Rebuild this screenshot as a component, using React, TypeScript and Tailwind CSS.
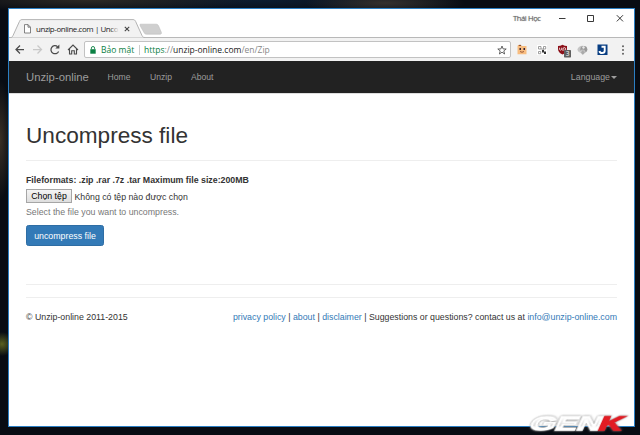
import React from "react";

const ui = "font-['Open_Sans','Noto_Sans',sans-serif]";

function Tab() {
  return (
    <div className="relative h-[29px] shrink-0">
      <svg className="absolute left-0 top-[10px]" width="170" height="19" viewBox="0 0 170 19">
        <path d="M0 18.5H1.5C3 18.5 3.4 17.8 4 16.6L10.4 2.6C11.1 1 11.6.6 13 .6H124C125.4 .6 126 1.2 126.7 2.6L133 16.6C133.7 18 134.3 18.5 136 18.5" fill="#f2f2f2" stroke="#b4b4b4" />
        <path d="M131.6 5.2H147C148.4 5.2 149 5.7 149.5 6.8L152.2 13C152.8 14.4 152.4 15.2 151 15.2H137.5C136.2 15.2 135.5 14.6 135 13.5L131.2 6.8C130.8 5.8 130.8 5.2 131.6 5.2Z" fill="#cfcfcf" stroke="#bdbdbd" strokeWidth=".6" />
      </svg>
      <div className={`relative flex items-center pl-[15px] pt-[13px] ${ui}`}>
        <svg width="7" height="10" viewBox="0 0 7 10" fill="#fff" stroke="#666" strokeWidth=".8">
          <path d="M.5 .6H4L6.5 3.2V9H.5ZM4 .6V3.2H6.5" />
        </svg>
        <div className="relative ml-[5px] h-[14px] w-[83px] whitespace-nowrap text-[7.9px] leading-[14px] tracking-[-0.39px] text-[#222]">
          unzip-online.com | Unco
          <div className="absolute right-0 top-0 h-full w-[9px] bg-linear-to-r from-transparent to-[#f2f2f2]" />
        </div>
        <svg className="ml-[5px]" width="6" height="6" viewBox="0 0 6 6" stroke="#444" strokeWidth="1.1">
          <path d="M.8 .8L5.2 5.2M5.2 .8L.8 5.2" />
        </svg>
      </div>
    </div>
  );
}

function TitleBar() {
  return (
    <div className="flex h-[29px] justify-between border-b border-[#b8b8b8] bg-white">
      <Tab />
      <div className="flex h-[17px] items-center">
        <span className={`w-[28px] whitespace-nowrap text-[7.6px] leading-[10px] tracking-[-0.4px] text-[#666] [text-shadow:0_0_1px_#999] ${ui}`}>Thái Học</span>
        <svg className="ml-[18px] mr-[9px]" width="66" height="10" viewBox="0 0 66 10" fill="none" stroke="#222" strokeWidth=".9">
          <path d="M0 5.5H6.5M28.5 2.5H34.5V8.5H28.5ZM57.8 2.2L64 8.4M64 2.2L57.8 8.4" />
        </svg>
      </div>
    </div>
  );
}

function Toolbar() {
  return (
    <div className={`flex h-[23px] items-center bg-[#f2f2f2] ${ui}`}>
      <svg className="ml-[5px] shrink-0" width="66" height="13" viewBox="0 0 66 13" fill="none" stroke="#4b4b4b" strokeWidth="1.25">
        <path d="M10 6.5H2M6 2.5L2 6.5L6 10.5" />
        <path d="M19 6.5H27M23.5 2.5L27.5 6.5L23.5 10.5" stroke="#c8c8c8" />
        <path d="M44.6 8.4A4 4 0 1 1 43.6 3.7" />
        <path d="M45.4 1.5V5.6H41.3Z" fill="#4b4b4b" stroke="none" />
        <path d="M54 7L59 2L64 7M55.5 6V11H57.7V7.8H60.3V11H62.5V6" strokeWidth="1.1" />
      </svg>
      <div className="ml-[4px] flex h-[17px] w-[427px] shrink-0 items-center rounded-[2px] border border-[#c2c2c2] bg-white text-[8.5px] leading-[15px] whitespace-nowrap">
        <svg className="ml-[5px]" width="6" height="8" viewBox="0 0 6 8">
          <path d="M.3 3.2H5.7V7.7H.3Z" fill="#0b8043" />
          <path d="M1.4 3.2V2.1A1.6 1.6 0 0 1 4.6 2.1V3.2" fill="none" stroke="#0b8043" strokeWidth=".9" />
        </svg>
        <span className="ml-[5px] w-[32px] text-[#0b8043]">Bảo mật</span>
        <span className="ml-[6px] h-[10px] w-px bg-[#ccc]" />
        <span className="ml-[4px] text-[#888]">
          <span className="text-[#0b8043]">https</span>://<span className="text-[#222]">unzip-online.com</span>/en/Zip
        </span>
        <svg className="ml-auto mr-[3px]" width="10" height="10" viewBox="0 0 10 10" fill="none" stroke="#555" strokeWidth=".9">
          <path d="M5 1L6.1 3.9L9.2 4L6.8 5.9L7.6 9L5 7.2L2.4 9L3.2 5.9L.8 4L3.9 3.9Z" />
        </svg>
      </div>
      <svg className="ml-[5px] shrink-0" width="112" height="18" viewBox="0 0 112 18">
        <path d="M1.5 5L2.2 4H4.5L5.4 5H10.5V13.3H1.5Z" fill="#f8bd80" />
        <path d="M2.3 4.1L4.5 3.8L5.5 5H3.5Z" fill="#8b4b24" />
        <path d="M3.5 7H5V9H3.5ZM7.5 7H9V9H7.5Z" fill="#352333" />
        <path d="M4 10.5Q6 12 8 10.5" stroke="#9c5b3a" fill="none" />
        <rect x="21" y="4" width="10" height="10" fill="#fff" />
        <path d="M22.5 5.5H25V8H22.5ZM27.5 5.5H29.7V8H27.5ZM22.5 10.5H24.7V12.7H22.5ZM25 8H27.2V10.2" fill="none" stroke="#888" strokeWidth=".8" />
        <path d="M26 9H28V10.5H30V13H28V11.5H26Z" fill="#333" />
        <path d="M46.5 3.7Q48.7 5 51 5V8Q50.8 11.7 46.5 13.5Q42.2 11.7 42 8V5Q44.5 5 46.5 3.7Z" fill="#8c1019" />
        <path d="M43.6 6.7V8.5Q44.5 9.8 45.7 8.5V6.7M47 10V8A1.3 1.3 0 1 1 48.3 9.2" fill="none" stroke="#fff" strokeWidth=".8" />
        <rect x="48" y="9" width="7" height="7.5" rx=".7" fill="#606060" />
        <text x="51.5" y="15" textAnchor="middle" fontSize="6.5" fontFamily="Open Sans, sans-serif" fill="#fff">3</text>
        <ellipse cx="66.5" cy="8.5" rx="5" ry="3.7" fill="#c5c5c5" />
        <circle cx="67.8" cy="8.3" r="3.4" fill="#999" />
        <path d="M67 5L69 6L68 8L66 7Z" fill="#e8e8e8" />
        <path d="M65.3 9H68.3V11H70L66.8 14L63.7 11H65.3Z" fill="#aaa" stroke="#eee" strokeWidth=".4" />
        <rect x="81.5" y="3.5" width="10" height="10.5" fill="#073d82" />
        <path d="M85.5 5.7H88.7V9.7Q88.7 12 86 12Q83.8 12 83.5 10" fill="none" stroke="#fff" strokeWidth="1.9" />
        <g fill="#555"><circle cx="107" cy="5.3" r=".95" /><circle cx="107" cy="9" r=".95" /><circle cx="107" cy="12.7" r=".95" /></g>
      </svg>
    </div>
  );
}

function Navbar() {
  return (
    <nav className="flex h-[32px] items-center bg-[#222] pl-[17px] pr-[17px] text-[8.6px] text-[#9d9d9d]">
      <span className="w-[81.5px] text-[11.3px]">Unzip-online</span>
      <span className="w-[42.5px]">Home</span>
      <span className="w-[41px]">Unzip</span>
      <span>About</span>
      <span className="ml-auto pt-px text-[8.8px]">Language</span>
      <span className="ml-px border-x-[3px] border-t-[3px] border-x-transparent border-t-[#9d9d9d]" />
    </nav>
  );
}

function UploadForm() {
  return (
    <main className="pt-[28px]">
      <h1 className="h-[39px] border-b border-[#eee] text-[22.6px] leading-[28px]">Uncompress file</h1>
      <p className="mt-[13px] text-[8.8px] leading-[12px] font-bold text-[#333]">Fileformats: .zip .rar .7z .tar Maximum file size:200MB</p>
      <div className="mt-[3px] flex h-[14px] items-center text-[8.75px]">
        <button className="h-[14px] w-[46px] border border-[#a6a6a6] bg-linear-to-b from-[#f5f5f5] to-[#dedede] leading-[12px] whitespace-nowrap text-black">Chọn tệp</button>
        <span className="ml-[2.5px] pt-px leading-[14px]">Không có tệp nào được chọn</span>
      </div>
      <p className="mt-[3px] text-[8.8px] leading-[12px] text-[#777]">Select the file you want to uncompress.</p>
      <button className="mt-[7px] block h-[21px] w-[78px] rounded-[2.5px] border border-[#2e6da4] bg-[#337ab7] pt-px text-[8.8px] leading-[18px] text-white">uncompress file</button>
    </main>
  );
}

function Footer() {
  return (
    <footer className="mt-[38px] border-t border-[#eee]">
      <div className="mt-[12px] flex justify-between border-t border-[#eee] pt-[13px] text-[8.8px] leading-[12px] whitespace-nowrap">
        <span>© Unzip-online 2011-2015</span>
        <span>
          <a className="text-[#337ab7]">privacy policy</a> | <a className="text-[#337ab7]">about</a> | <a className="text-[#337ab7]">disclaimer</a> | Suggestions or questions? contact us at <a className="text-[#337ab7]">info@unzip-online.com</a>
        </span>
      </div>
    </footer>
  );
}

function Watermark() {
  return (
    <svg className="absolute left-[524px] top-[411px]" width="110" height="24" viewBox="0 0 110 24">
      <defs>
        <linearGradient id="silver" x1="0" y1="0" x2="0" y2="1">
          <stop offset="0.25" stopColor="#fff" />
          <stop offset="0.6" stopColor="#ddd" />
          <stop offset="0.7" stopColor="#fff" />
        </linearGradient>
      </defs>
      <g fontFamily="Liberation Sans, sans-serif" fontWeight="700" fontSize="19.5" transform="translate(4 19.3) skewX(-24)" style={{ filter: "drop-shadow(0 0 1px #777)" }}>
        <text x="0" y="0" fill="url(#silver)" stroke="#fff" strokeWidth="1.4" textLength="71" lengthAdjust="spacingAndGlyphs">GEN</text>
        <text x="69" y="0" fill="#e21c24" stroke="#e21c24" strokeWidth="1.5" textLength="23" lengthAdjust="spacingAndGlyphs">K</text>
      </g>
    </svg>
  );
}

export default function App() {
  return (
    <div className="relative h-[435px] w-[640px] overflow-hidden bg-[#080c13] bg-[radial-gradient(ellipse_12px_60px_at_0px_140px,#3a3025,transparent),radial-gradient(ellipse_12px_12px_at_2px_344px,#59601f,transparent),radial-gradient(ellipse_160px_12px_at_90px_0px,#2c2925,transparent),radial-gradient(ellipse_80px_12px_at_385px_3px,#34302d,transparent),radial-gradient(ellipse_200px_14px_at_260px_0px,#0b1c30,transparent)] pt-[8px] pl-[8px] font-['Liberation_Sans',Arial,sans-serif] text-[#333]">
      <div className="h-[419px] w-[627px] border border-[#2b7fc4] bg-white">
        <TitleBar />
        <Toolbar />
        <Navbar />
        <div className="border-t border-[#ddd] pr-[17px] pl-[17px]">
          <UploadForm />
          <Footer />
        </div>
      </div>
      <Watermark />
    </div>
  );
}
